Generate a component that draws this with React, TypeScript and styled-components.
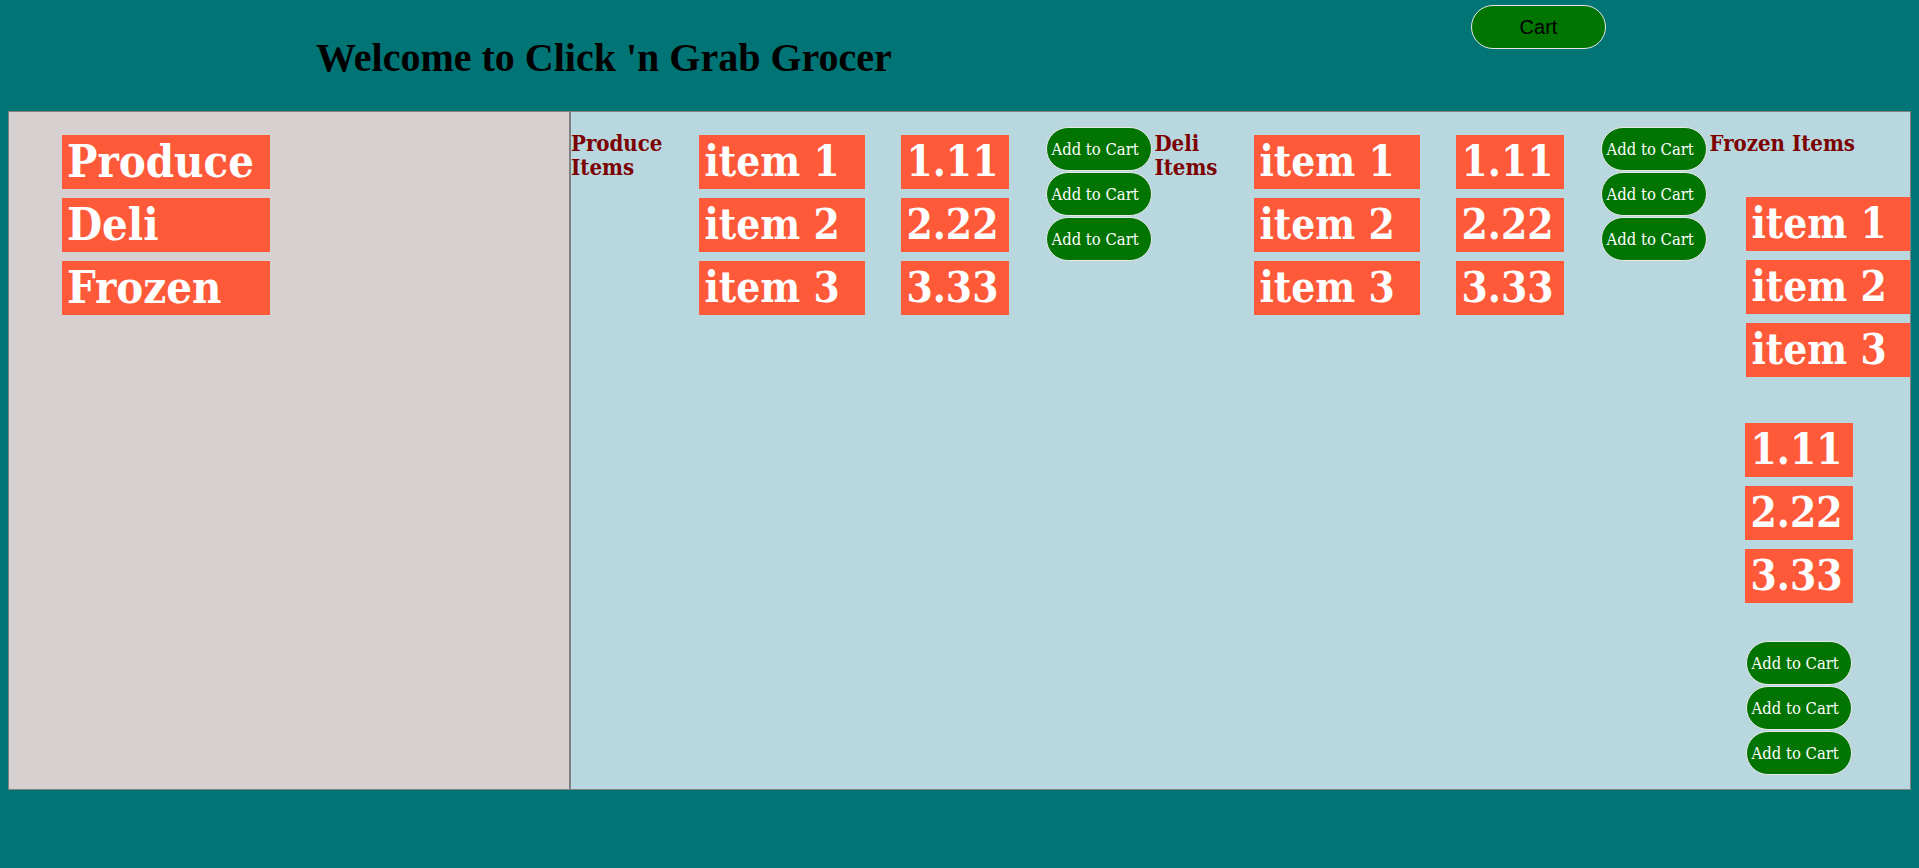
import React from "react";
import styled, { createGlobalStyle } from "styled-components";

const serif = `"DejaVu Serif Condensed", "DejaVu Serif", Georgia, serif`;

const Global = createGlobalStyle`
  html { background: #017575; }
  body {
    margin: 0 8px;
    background: #017575;
    font-family: ${serif};
    min-height: 100vh;
  }
  * { box-sizing: border-box; }
`;

const Header = styled.header`
  height: 111px;
  display: flex;
  justify-content: space-between;
  align-items: flex-start;
  padding: 0 305px 0 308px;
`;

const Title = styled.h1`
  margin: 35px 0 0;
  font: 700 40px/46px "Liberation Serif", "Times New Roman", serif;
  color: #000;
  white-space: nowrap;
`;

const CartButton = styled.button`
  margin-top: 5px;
  width: 135px;
  height: 44px;
  background: #017401;
  border: 1px solid #e6e6e6;
  border-radius: 22px;
  color: #000;
  font: 400 20px "Liberation Sans", Arial, sans-serif;
  padding: 0;
  cursor: pointer;
`;

const Main = styled.main`
  display: flex;
  height: 679px;
`;

const Sidebar = styled.aside`
  width: 562px;
  flex: none;
  border: 1px solid #808080;
  background: #d6d0d0;
  padding: 23px 0 0 53px;
  display: flex;
  flex-direction: column;
  gap: 9px;
`;

const RedBox = styled.div<{ $w: number; $size: number }>`
  width: ${(p) => p.$w}px;
  height: 54px;
  line-height: 54px;
  background: #fe5a3a;
  color: #fff;
  font-family: ${serif};
  font-weight: 700;
  font-size: ${(p) => p.$size}px;
  padding-left: 5px;
  white-space: nowrap;
  overflow: hidden;
`;

const Content = styled.section`
  flex: 1;
  min-width: 0;
  display: flex;
  gap: 2px;
  border: 1px solid #808080;
  background: #b8d7de;
  overflow: hidden;
`;

const Department = styled.div<{ $wrap: boolean }>`
  display: flex;
  flex-wrap: ${(p) => (p.$wrap ? "wrap" : "nowrap")};
  align-items: flex-start;
  flex: ${(p) => (p.$wrap ? "1 1 0" : "none")};
  min-width: 0;
`;

const DeptLabel = styled.h3<{ $narrow: boolean }>`
  margin: 19px 0;
  font-family: ${serif};
  font-weight: 700;
  font-size: 22px;
  line-height: 24px;
  color: #7c0000;
  width: ${(p) => (p.$narrow ? "min-content" : "auto")};
  white-space: ${(p) => (p.$narrow ? "normal" : "nowrap")};
`;

const BoxList = styled.div<{ $ml: number }>`
  margin: 23px 0 23px ${(p) => p.$ml}px;
  display: flex;
  flex-direction: column;
  gap: 9px;
`;

const ButtonList = styled.div`
  margin: 15px 0 16px 37px;
  display: flex;
  flex-direction: column;
  gap: 1px;
`;

const AddButton = styled.button`
  width: 106px;
  height: 44px;
  background: #017401;
  border: 1px solid #e8e8e8;
  border-radius: 22px;
  color: #fff;
  font-family: ${serif};
  font-size: 16.5px;
  text-align: left;
  padding: 0 0 0 4px;
  white-space: nowrap;
  cursor: pointer;
`;

const categories = ["Produce", "Deli", "Frozen"];
const items = ["item 1", "item 2", "item 3"];
const prices = ["1.11", "2.22", "3.33"];
const departments = [
  { name: "Produce Items", wrap: false },
  { name: "Deli Items", wrap: false },
  { name: "Frozen Items", wrap: true },
];

export default function App() {
  return (
    <>
      <Global />
      <Header>
        <Title>Welcome to Click 'n Grab Grocer</Title>
        <CartButton>Cart</CartButton>
      </Header>
      <Main>
        <Sidebar>
          {categories.map((c) => (
            <RedBox key={c} $w={208} $size={45}>
              {c}
            </RedBox>
          ))}
        </Sidebar>
        <Content>
          {departments.map((d) => (
            <Department key={d.name} $wrap={d.wrap}>
              <DeptLabel $narrow={!d.wrap}>{d.name}</DeptLabel>
              <BoxList $ml={37}>
                {items.map((i) => (
                  <RedBox key={i} $w={166} $size={42}>
                    {i}
                  </RedBox>
                ))}
              </BoxList>
              <BoxList $ml={36}>
                {prices.map((p) => (
                  <RedBox key={p} $w={108} $size={42}>
                    {p}
                  </RedBox>
                ))}
              </BoxList>
              <ButtonList>
                {items.map((i) => (
                  <AddButton key={i}>Add to Cart</AddButton>
                ))}
              </ButtonList>
            </Department>
          ))}
        </Content>
      </Main>
    </>
  );
}
